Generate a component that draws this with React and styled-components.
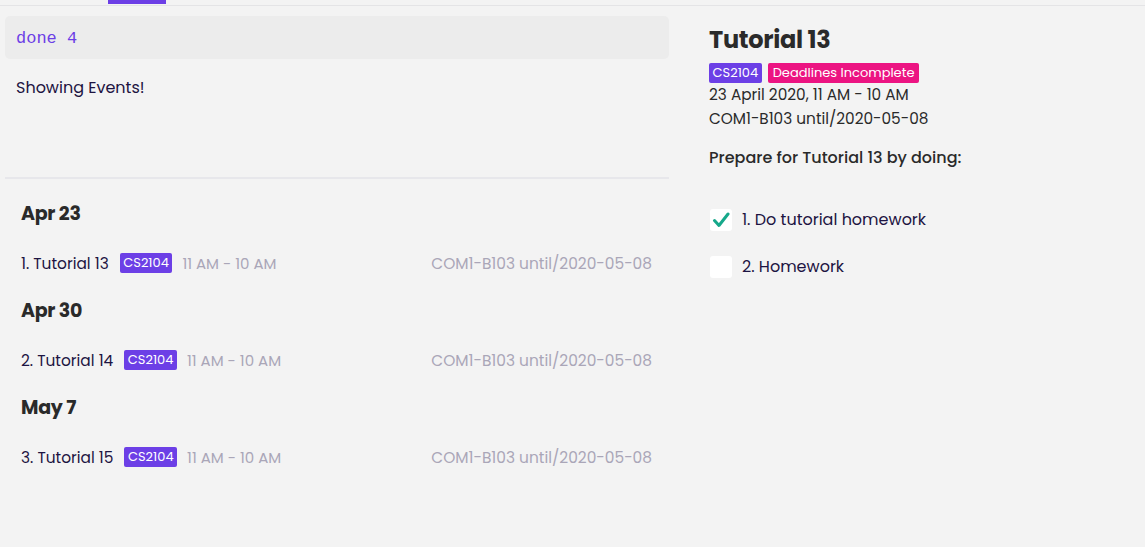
import styled, { createGlobalStyle } from 'styled-components';

const GlobalStyle = createGlobalStyle`
    body {
        margin: 0;
        background-color: #f3f3f3;
        font-family: Poppins, Inter, "Noto Sans", sans-serif;
    }
`
const Page = styled.div`
    width: 1145px;
    height: 547px;
    overflow: hidden;
    background-color: #f3f3f3;
`
const TabBar = styled.div`
    height: 5px;
    border-bottom: 1px solid #e4e4e6;
    position: relative;
`
const TabIndicator = styled.div`
    position: absolute;
    left: 108px;
    top: 0;
    width: 58px;
    height: 4px;
    background-color: #6c3fe6;
`
const Main = styled.div`
    display: flex;
    align-items: flex-start;
`
const LeftColumn = styled.div`
    width: 664px;
    margin-left: 5px;
    padding-top: 10px;
`
const CommandBox = styled.div`
    height: 43px;
    padding: 2px 11px 0;
    box-sizing: border-box;
    display: flex;
    align-items: center;
    background-color: #ececec;
    border-radius: 5px;
    font-family: "Liberation Mono", "DejaVu Sans Mono", monospace;
    font-size: 17px;
    color: #6c3fe6;
`
const ResultText = styled.div`
    height: 118px;
    padding: 18px 11px 0;
    box-sizing: border-box;
    font-size: 16px;
    line-height: 22px;
    color: #1d1442;
`
const Divider = styled.div`
    height: 2px;
    background-color: #e7e7eb;
`
const EventList = styled.div`
    padding: 23px 17px 0 16px;
`
const DayHeading = styled.div`
    font-size: 19px;
    font-weight: 700;
    line-height: 24px;
    color: #2a2a2a;
    letter-spacing: -0.3px;
`
const EventRow = styled.div`
    display: flex;
    align-items: center;
    height: 24px;
    margin: 25px 0 24px;
    font-size: 15.4px;
`
const EventName = styled.span`
    color: #1d1442;
    margin-right: 11px;
`
const Badge = styled.span`
    display: inline-flex;
    align-items: center;
    height: 20px;
    padding: 0 ${p => p.$pad || 3.5}px;
    border-radius: 2px;
    font-size: 13px;
    color: #ffffff;
    background-color: ${p => p.$color || '#6c3fe6'};
`
const Muted = styled.span`
    color: #aaa6b8;
    margin-left: 10px;
    font-size: 15px;
`
const Location = styled.span`
    margin-left: auto;
    color: #aaa6b8;
`
const RightColumn = styled.div`
    flex: 1;
    padding: 19px 0 0 40px;
`
const Title = styled.div`
    font-size: 24px;
    font-weight: 700;
    line-height: 30px;
    color: #2a2a2a;
    letter-spacing: -0.3px;
`
const BadgeRow = styled.div`
    display: flex;
    gap: 6px;
    margin-top: 8px;
`
const InfoLine = styled.div`
    font-size: 15.3px;
    line-height: 24px;
    color: #2a2a2a;
`
const Prompt = styled.div`
    margin-top: 15px;
    font-size: 16px;
    font-weight: 500;
    line-height: 24px;
    color: #2a2a2a;
`
const TaskList = styled.div`
    margin-top: 37px;
    display: flex;
    flex-direction: column;
    gap: 22px;
`
const Task = styled.div`
    display: flex;
    align-items: center;
    gap: 10px;
    font-size: 16px;
    color: #1d1442;
`
const CheckBox = styled.div`
    width: 22px;
    height: 22px;
    margin-left: 1px;
    border-radius: 3px;
    background-color: #ffffff;
    display: flex;
    align-items: center;
    justify-content: center;
`

const days = [
    { day: 'Apr 23', name: '1. Tutorial 13' },
    { day: 'Apr 30', name: '2. Tutorial 14' },
    { day: 'May 7', name: '3. Tutorial 15' },
]

const tasks = [
    { label: '1. Do tutorial homework', done: true },
    { label: '2. Homework', done: false },
]

function Check(){
    return(
        <svg width="18" height="16" viewBox="0 0 18 16">
            <path d="M2.5 8.5 L7 13.5 L16 2" fill="none" stroke="#16a88a" strokeWidth="3" strokeLinecap="round" strokeLinejoin="round"/>
        </svg>
    )
}

export default function App(){
    return(
        <Page>
            <GlobalStyle/>
            <TabBar>
                <TabIndicator/>
            </TabBar>
            <Main>
                <LeftColumn>
                    <CommandBox>done 4</CommandBox>
                    <ResultText>Showing Events!</ResultText>
                    <Divider/>
                    <EventList>
                        {days.map(d => (
                            <div key={d.day}>
                                <DayHeading>{d.day}</DayHeading>
                                <EventRow>
                                    <EventName>{d.name}</EventName>
                                    <Badge>CS2104</Badge>
                                    <Muted>11 AM - 10 AM</Muted>
                                    <Location>COM1-B103 until/2020-05-08</Location>
                                </EventRow>
                            </div>
                        ))}
                    </EventList>
                </LeftColumn>
                <RightColumn>
                    <Title>Tutorial 13</Title>
                    <BadgeRow>
                        <Badge>CS2104</Badge>
                        <Badge $color="#ec1482" $pad={5}>Deadlines Incomplete</Badge>
                    </BadgeRow>
                    <InfoLine>23 April 2020, 11 AM - 10 AM</InfoLine>
                    <InfoLine>COM1-B103 until/2020-05-08</InfoLine>
                    <Prompt>Prepare for Tutorial 13 by doing:</Prompt>
                    <TaskList>
                        {tasks.map(t => (
                            <Task key={t.label}>
                                <CheckBox>{t.done && <Check/>}</CheckBox>
                                {t.label}
                            </Task>
                        ))}
                    </TaskList>
                </RightColumn>
            </Main>
        </Page>
    )
}
